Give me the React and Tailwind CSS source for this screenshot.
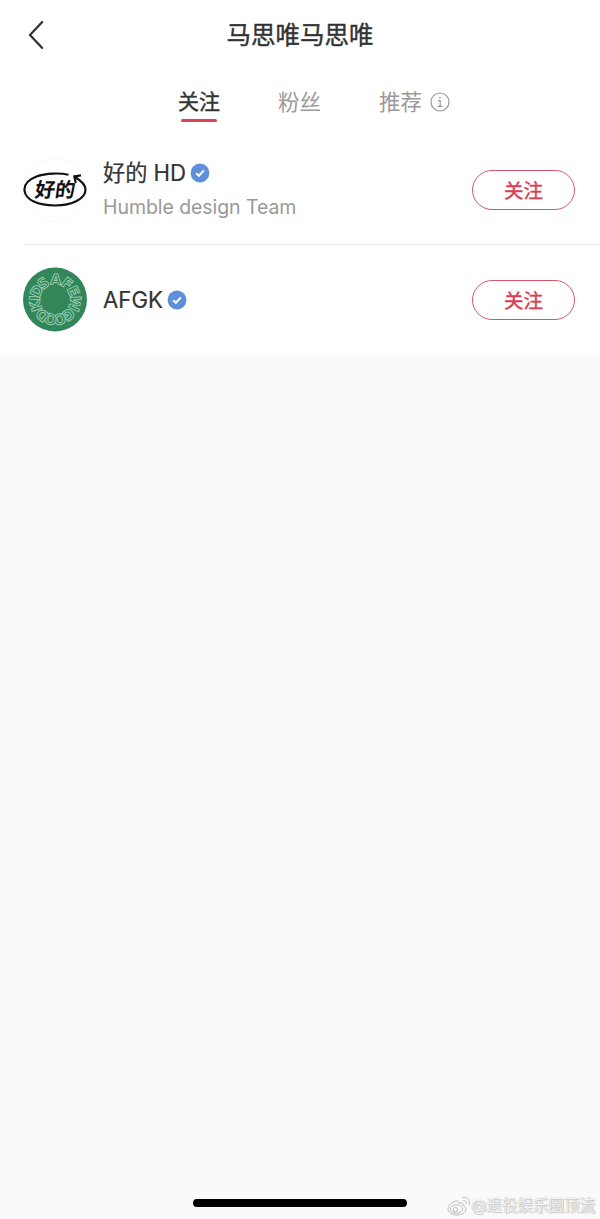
import { useState } from "react";

const TABS = [
  { id: "following", label: "关注" },
  { id: "fans", label: "粉丝" },
  { id: "recommend", label: "推荐", info: true },
];

// letters around the badge, angle is clockwise from the top
const RING = [
  { char: "A", angle: 2 },
  { char: "F", angle: 37 },
  { char: "E", angle: 65 },
  { char: "W", angle: 101 },
  { char: "G", angle: 139 },
  { char: "O", angle: 167 },
  { char: "O", angle: 193 },
  { char: "D", angle: 219 },
  { char: "K", angle: 252 },
  { char: "I", angle: 274 },
  { char: "D", angle: 295 },
  { char: "S", angle: 324 },
];

function HaodeAvatar() {
  return (
    <svg viewBox="0 0 64 64" className="h-16 w-16 shrink-0">
      <circle cx="32" cy="32" r="31.5" fill="#fff" stroke="#f8f8f8" />
      <path
        d="M45.5 16.7C38 15 23 14.700 13.500 18.500C4.500 22 1 27 1.500 32.500C2.500 42 15 47.500 32 47.500C49 47.500 62.500 41 62.500 31.500C62.500 27 58.500 23 52 19"
        fill="none"
        stroke="#111"
        strokeWidth="2.200"
      />
      <path
        d="M58 17.400L51.300 18.500L52.800 25"
        fill="none"
        stroke="#111"
        strokeWidth="2.200"
      />
      <text
        x="32"
        y="39.200"
        textAnchor="middle"
        fontSize="20"
        fontWeight="700"
        fill="#111"
        transform="translate(4.800 0) skewX(-8)"
        className="font-['Noto_Sans_CJK_SC',sans-serif]"
      >
        好的
      </text>
    </svg>
  );
}

function KidsAvatar() {
  return (
    <svg viewBox="0 0 64 64" className="h-16 w-16 shrink-0 overflow-visible">
      <circle cx="32" cy="31.500" r="32" fill="#32865a" />
      {RING.map(({ char, angle }) => (
        <text
          key={angle}
          x="32"
          y="16.500"
          textAnchor="middle"
          fontSize="14.500"
          fontWeight="700"
          fill="#32865a"
          stroke="#a3d6bb"
          strokeWidth="0.8"
          transform={`rotate(${angle} 32 31.5)`}
          className="font-['DejaVu_Sans',sans-serif]"
        >
          {char}
        </text>
      ))}
    </svg>
  );
}

function VerifiedIcon() {
  return (
    <svg viewBox="0 0 20 20" className="ml-1 h-5 w-5 shrink-0">
      <circle cx="10" cy="10" r="9.400" fill="#5f8fda" />
      <path
        d="M6.200 10.200L8.900 12.800L13.900 7.400"
        fill="none"
        stroke="#fff"
        strokeWidth="2"
      />
    </svg>
  );
}

function InfoIcon() {
  return (
    <svg viewBox="0 0 20 20" className="ml-2 h-5 w-5" fill="none" stroke="#999">
      <circle cx="10" cy="10" r="9" strokeWidth="1.200" />
      <circle cx="9.900" cy="5.600" r="0.900" fill="#999" stroke="none" />
      <path d="M8 8.600H10.200V14.300M7.800 14.400H12.400" strokeWidth="1.100" />
    </svg>
  );
}

function UserRow({ avatar, name, desc }) {
  return (
    <div className="flex h-[110px] items-center pl-[23px] pr-[25px]">
      {avatar}
      <div className="ml-4 flex-1">
        <div className="flex h-[30px] items-center text-[22.200px] text-[#333] [-webkit-text-stroke:0.2px_#333]">
          {name}
          <VerifiedIcon />
        </div>
        {desc && (
          <div className="mt-1 h-[30px] text-[19.500px] leading-[30px] tracking-[-0.07px] text-[#999]">
            {desc}
          </div>
        )}
      </div>
      <button className="h-10 w-[103px] rounded-full border border-[#d9566a] pt-px text-[19.500px] leading-[38px] text-[#dc3c52] [-webkit-text-stroke:0.4px_#dc3c52]">
        关注
      </button>
    </div>
  );
}

function Watermark() {
  return (
    <div className="absolute bottom-0 right-[5px] flex h-[27px] items-center text-[15.500px] text-[#f4f4f4] [text-shadow:0_0_1px_#999,1px_1px_1px_#ccc]">
      <svg
        viewBox="0 0 24 20"
        className="mr-px h-5 w-6"
        fill="none"
        stroke="#bbb"
      >
        <path d="M10 5C5 5 1 9.500 1 13C1 16.500 5 19 10 19C15.500 19 19 16 19 13C19 11 17.500 10 16 9.500C16.500 7 15 6 12 7.500C12 6 11.500 5 10 5Z" />
        <ellipse cx="9.500" cy="13" rx="6" ry="4.200" />
        <circle cx="8.500" cy="13.500" r="2.200" />
        <path d="M15.500 4.500C18.500 4 20 6 19 8.500M15.500 1.500C20.500 0.500 23.500 4.500 22 9" />
      </svg>
      @退役娱乐圈顶流
    </div>
  );
}

export default function App() {
  const [active, setActive] = useState("following");

  return (
    <div className="relative flex h-[1219px] w-[600px] flex-col overflow-hidden bg-[#fafafa] font-[Inter,'Noto_Sans_CJK_SC',sans-serif]">
      <div className="bg-white">
        <header className="grid h-[70px] grid-cols-[60px_1fr_60px] items-center">
          <button className="pl-7" aria-label="返回">
            <svg viewBox="0 0 16 28" className="h-7 w-4">
              <path
                d="M14 1.200L2 14L14 26.800"
                fill="none"
                stroke="#333"
                strokeWidth="2.300"
                strokeLinecap="round"
                strokeLinejoin="round"
              />
            </svg>
          </button>
          <h1 className="text-center text-[24.500px] leading-[36px] text-[#333] [-webkit-text-stroke:0.4px_#333]">
            马思唯马思唯
          </h1>
        </header>

        <nav className="flex h-[65px] gap-[58px] pl-[178px] pt-[17px]">
          {TABS.map((tab) => (
            <button
              key={tab.id}
              onClick={() => setActive(tab.id)}
              className={
                active === tab.id
                  ? "flex h-9 flex-col items-center text-[21px] leading-[30px] text-[#333] [-webkit-text-stroke:0.4px_#333]"
                  : "flex h-[29px] items-center text-[21.500px] leading-[30px] text-[#999]"
              }
            >
              {tab.label}
              {tab.info && <InfoIcon />}
              {active === tab.id && (
                <span className="mt-[2px] h-[3px] w-9 shrink-0 rounded-full bg-[#db4358]" />
              )}
            </button>
          ))}
        </nav>

        <UserRow
          avatar={<HaodeAvatar />}
          name="好的 HD"
          desc="Humble design Team"
        />
        <div className="-mt-px ml-[23px] h-px bg-[#ececec]" />
        <UserRow avatar={<KidsAvatar />} name="AFGK" />
      </div>

      <div className="mt-auto flex justify-center pb-3">
        <div className="h-2 w-[214px] rounded-full bg-black" />
      </div>
      <Watermark />
    </div>
  );
}
